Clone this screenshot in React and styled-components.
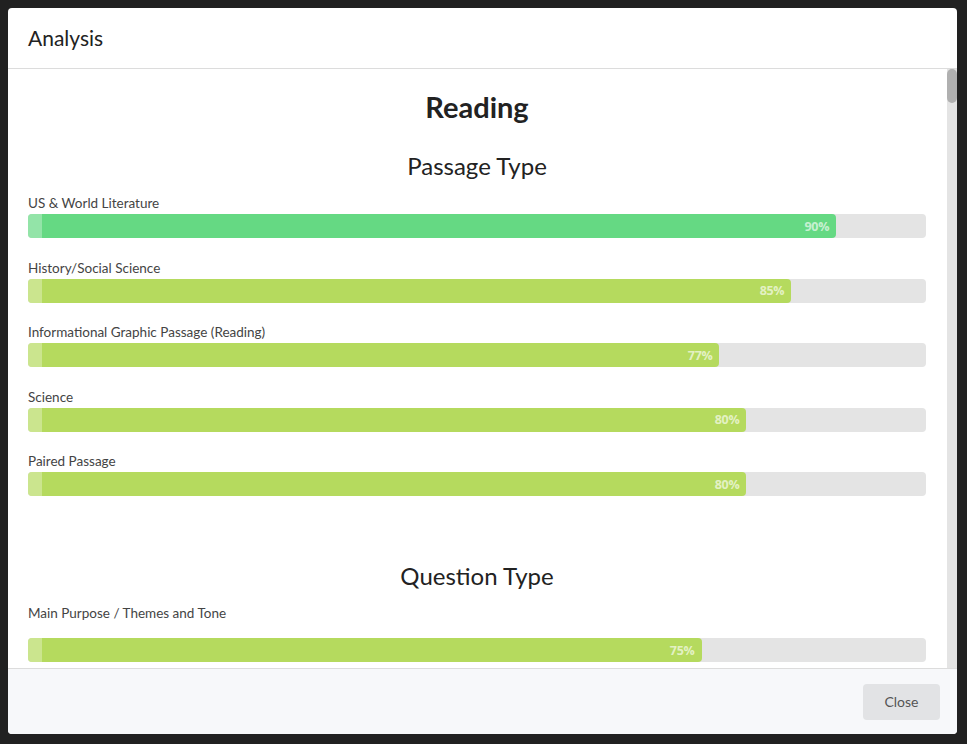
import React from "react";
import styled, { createGlobalStyle } from "styled-components";

const passageTypes = [
  { label: "US & World Literature", value: 90 },
  { label: "History/Social Science", value: 85 },
  { label: "Informational Graphic Passage (Reading)", value: 77 },
  { label: "Science", value: 80 },
  { label: "Paired Passage", value: 80 }
];

const questionTypes = [{ label: "Main Purpose / Themes and Tone", value: 75 }];

const barColor = value => (value >= 90 ? "#65d983" : "#b5da5e");

function Bar({ label, value, loose }) {
  return (
    <Row>
      <Label loose={loose}>{label}</Label>
      <Track>
        <Fill style={{ width: `${value}%` }} color={barColor(value)}>
          <Percent>{value}%</Percent>
        </Fill>
      </Track>
    </Row>
  );
}

function App() {
  return (
    <Backdrop>
      <GlobalStyle />
      <Modal>
        <Header>
          <Title>Analysis</Title>
        </Header>
        <Body>
          <Content>
            <SubjectTitle>Reading</SubjectTitle>
            <Section>
              <SectionTitle>Passage Type</SectionTitle>
              {passageTypes.map(item => (
                <Bar key={item.label} label={item.label} value={item.value} />
              ))}
            </Section>
            <Section spaced>
              <SectionTitle>Question Type</SectionTitle>
              {questionTypes.map(item => (
                <Bar key={item.label} label={item.label} value={item.value} loose />
              ))}
            </Section>
          </Content>
          <ScrollTrack>
            <ScrollThumb />
          </ScrollTrack>
        </Body>
        <Footer>
          <CloseButton>Close</CloseButton>
        </Footer>
      </Modal>
    </Backdrop>
  );
}

const GlobalStyle = createGlobalStyle`
  html, body {
    margin: 0;
    padding: 0;
    background: #212121;
  }
  * {
    box-sizing: border-box;
  }
`;

const Backdrop = styled.div`
  width: 967px;
  height: 744px;
  padding: 8px 10px 10px 8px;
  background: #212121;
  font-family: "Lato", "Liberation Sans", sans-serif;
`;

const Modal = styled.div`
  display: flex;
  flex-direction: column;
  height: 100%;
  background: #fff;
  border-radius: 4px;
  overflow: hidden;
`;

const Header = styled.div`
  height: 61px;
  flex-shrink: 0;
  display: flex;
  align-items: center;
  padding: 0 20px;
  border-bottom: 1px solid #dcdcdc;
`;

const Title = styled.h1`
  margin: 0;
  font-size: 21px;
  font-weight: 400;
  color: #222;
  padding-bottom: 2px;
`;

const Body = styled.div`
  flex: 1;
  min-height: 0;
  display: flex;
`;

const Content = styled.div`
  flex: 1;
  overflow: hidden;
  padding: 22px 21px 0 20px;
`;

const ScrollTrack = styled.div`
  width: 10px;
  flex-shrink: 0;
  background: #e4e4e4;
`;

const ScrollThumb = styled.div`
  height: 34px;
  background: #b0b0b0;
  border-radius: 5px;
`;

const SubjectTitle = styled.h2`
  margin: 0;
  text-align: center;
  font-size: 29px;
  line-height: 32px;
  font-weight: 700;
  color: #222;
`;

const Section = styled.div`
  margin-top: ${p => (p.spaced ? "65px" : "28px")};
`;

const SectionTitle = styled.h3`
  margin: 0 0 13px;
  text-align: center;
  font-size: 24px;
  line-height: 30px;
  font-weight: 400;
  color: #222;
`;

const Row = styled.div`
  margin-bottom: 20.5px;
`;

const Label = styled.div`
  font-size: 13.5px;
  line-height: 18px;
  color: #444;
  margin-bottom: ${p => (p.loose ? "16px" : "2px")};
`;

const Track = styled.div`
  height: 24px;
  background: #e4e4e4;
  border-radius: 4px;
`;

const Fill = styled.div`
  position: relative;
  height: 100%;
  background: ${p => p.color};
  border-radius: 4px;
  display: flex;
  align-items: center;
  justify-content: flex-end;
  padding-right: 7px;

  &::before {
    content: "";
    position: absolute;
    left: 0;
    top: 0;
    bottom: 0;
    width: 14px;
    border-radius: 4px 0 0 4px;
    background: rgba(255, 255, 255, 0.3);
  }
`;

const Percent = styled.span`
  font-family: "Open Sans", "Liberation Sans", sans-serif;
  font-size: 12.5px;
  font-weight: 700;
  letter-spacing: -0.3px;
  color: rgba(255, 255, 255, 0.65);
`;

const Footer = styled.div`
  height: 66px;
  flex-shrink: 0;
  display: flex;
  align-items: center;
  justify-content: flex-end;
  padding: 0 17px 0 20px;
  background: #f7f8fa;
  border-top: 1px solid #dcdcdc;
`;

const CloseButton = styled.button`
  width: 77px;
  height: 36px;
  border: none;
  border-radius: 4px;
  background: #e2e3e5;
  color: #555;
  font-family: "Lato", "Liberation Sans", sans-serif;
  font-size: 14px;
  cursor: pointer;
`;

export default App;
